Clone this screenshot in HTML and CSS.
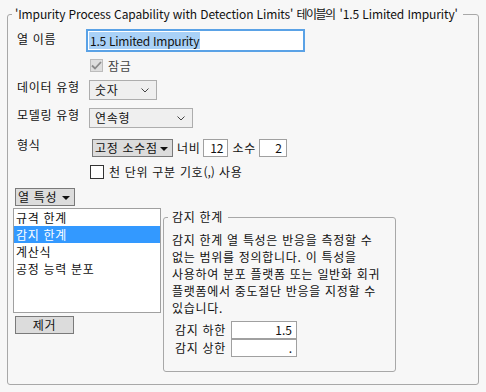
FILE: index.html
```html
<!DOCTYPE html>
<html lang="ko">
<head>
<meta charset="utf-8">
<link rel="stylesheet" href="styles.css">
</head>
<body>
<fieldset class="outer">
  <legend class="outer-legend">'Impurity Process Capability with Detection Limits' <span class="ko-tight">테이블의</span> '1.5 Limited Impurity'</legend>

  <div class="row row-name">
    <span class="label">열 이름</span>
    <div class="name-input"><span class="sel lat">1.5 Limited Impurity</span></div>
  </div>

  <div class="row row-lock">
    <span class="check checked-disabled">
      <svg width="11" height="9" viewBox="0 0 11 9"><path d="M1 4.5 L4 7.5 L10 1" fill="none" stroke="#8a8a8a" stroke-width="1.8"/></svg>
    </span>
    <span class="lock-text">잠금</span>
  </div>

  <div class="row row-select">
    <span class="label">데이터 유형</span>
    <div class="select sel-type"><span>숫자</span>
      <svg class="chev" width="8" height="5" viewBox="0 0 8 5"><path d="M0.5 0.5 L4 4 L7.5 0.5" fill="none" stroke="#444" stroke-width="1"/></svg>
    </div>
  </div>

  <div class="row row-select row-model">
    <span class="label">모델링 유형</span>
    <div class="select sel-model"><span>연속형</span>
      <svg class="chev" width="8" height="5" viewBox="0 0 8 5"><path d="M0.5 0.5 L4 4 L7.5 0.5" fill="none" stroke="#444" stroke-width="1"/></svg>
    </div>
  </div>

  <div class="row row-format">
    <span class="label">형식</span>
    <div class="format-controls">
      <div class="btn combo combo-format">고정 소수점 <span class="tri"></span></div>
      <span class="flabel">너비</span>
      <div class="numbox nb-width lat">12</div>
      <span class="flabel">소수</span>
      <div class="numbox nb-dec lat">2</div>
    </div>
  </div>

  <div class="row row-thousand">
    <span class="check"></span>
    <span class="thousand-text">천 단위 구분 기호<span class="lat">(,)</span> 사용</span>
  </div>

  <div class="row row-props">
    <div class="btn combo combo-props">열 특성 <span class="tri"></span></div>
  </div>

  <div class="lower">
    <div class="left-col">
      <ul class="list">
        <li>규격 한계</li>
        <li class="selected">감지 한계</li>
        <li>계산식</li>
        <li>공정 능력 분포</li>
      </ul>
      <div class="btn remove">제거</div>
    </div>

    <fieldset class="inner">
      <legend class="inner-legend">감지 한계</legend>
      <p class="desc">감지 한계 열 특성은 반응을 측정할 수<br>없는 범위를 정의합니다. 이 특성을<br>사용하여 분포 플랫폼 또는 일반화 회귀<br>플랫폼에서 중도절단 반응을 지정할 수<br>있습니다.</p>
      <div class="limit-row">
        <span class="limit-label">감지 하한</span>
        <div class="numbox limit-box lat">1.5</div>
      </div>
      <div class="limit-row">
        <span class="limit-label">감지 상한</span>
        <div class="numbox limit-box lat">.</div>
      </div>
    </fieldset>
  </div>
</fieldset>
</body>
</html>
```
FILE: styles.css
```css
* { box-sizing: border-box; }
html, body {
  margin: 0;
  padding: 0;
  width: 486px;
  height: 392px;
  background: #f7f7f7;
  overflow: hidden;
}
body {
  font-family: "Noto Sans CJK KR", "Noto Sans", sans-serif;
  font-size: 12px;
  letter-spacing: 0.7px;
  line-height: 16px;
  color: #111;
  padding: 6px 7px 7px 7px;
}
.lat { font-size: 12px; letter-spacing: 0; }
.outer {
  margin: 0;
  padding: 0;
  height: 379px;
  border: 1px solid #a8a8a8;
  border-radius: 3px;
  min-width: 0;
}
.outer-legend {
  margin-left: 4px;
  padding: 0 5px 0 3px;
  height: 16px;
  line-height: 16px;
  letter-spacing: -0.12px;
  white-space: nowrap;
}
.ko-tight { letter-spacing: -1.6px; margin-right: 2px; }
.row {
  display: flex;
  align-items: center;
}
.label {
  width: 69px;
  margin-left: 9px;
  flex: none;
  white-space: nowrap;
}
.row-name { margin-top: 7px; height: 23px; }
.row-name .label { margin-top: -3px; }
.name-input {
  width: 219px;
  height: 23px;
  border: 2px solid #5aa2e6;
  background: #fff;
  padding: 1px 0 0 1px;
}
.sel {
  display: inline-block;
  background: #a9d1f7;
  height: 17px;
  line-height: 17px;
  padding: 0 1px;
  letter-spacing: -0.25px;
}
.row-lock { margin-top: 7px; height: 13px; }
.check {
  width: 13px;
  height: 13px;
  border: 1px solid #333;
  background: #fff;
  display: inline-flex;
  align-items: center;
  justify-content: center;
  flex: none;
}
.row-lock .check { margin-left: 82px; }
.checked-disabled {
  background: #dedede;
  border-color: #bcbcbc;
}
.lock-text { margin-left: 5px; color: #444; }

.row-select { margin-top: 8px; height: 20px; align-items: flex-start; }
.row-select .label { margin-top: -1px; }
.row-model { margin-top: 8px; }
.select {
  margin-left: 3px;
  height: 20px;
  border: 1px solid #adadad;
  background: #efefef;
  display: flex;
  align-items: center;
  justify-content: space-between;
  padding: 0 7px 0 5px;
}
.sel-type { width: 68px; }
.sel-model { width: 104px; }
.chev { flex: none; }

.row-format { margin-top: 11px; height: 18px; align-items: flex-start; }
.row-format .label { margin-top: -2px; }
.format-controls {
  display: flex;
  align-items: center;
  margin-left: 6px;
}
.btn {
  height: 18px;
  background: #dcdcdc;
  border: 1px solid #7a7a7a;
  display: flex;
  align-items: center;
  white-space: nowrap;
}
.combo { padding: 0 4px 0 2px; }
.combo-format { width: 81px; justify-content: space-between; }
.tri {
  width: 0;
  height: 0;
  border-left: 4px solid transparent;
  border-right: 4px solid transparent;
  border-top: 4px solid #111;
  margin-top: 1px;
}
.flabel { margin: 0 3px 0 4px; }
.numbox {
  height: 18px;
  background: #fff;
  border: 1px solid #a0a0a0;
  text-align: right;
  padding: 0 4px 0 0;
  line-height: 16px;
}
.nb-width { width: 25px; }
.nb-dec { width: 28px; }

.row-thousand { margin-top: 8px; height: 14px; }
.row-thousand .check { width: 14px; height: 14px; margin-left: 82px; border-color: #333; }
.thousand-text { margin-left: 5px; }

.row-props { margin-top: 9px; height: 18px; padding-left: 7px; }
.combo-props { width: 60px; justify-content: space-between; }

.lower {
  display: flex;
  align-items: flex-start;
  margin-top: 2px;
  padding-left: 5px;
}
.left-col { width: 148px; flex: none; }
.list {
  list-style: none;
  margin: 0;
  padding: 0;
  height: 105px;
  background: #fff;
  border: 1px solid #a0a0a0;
}
.list li {
  height: 17px;
  line-height: 17px;
  padding-left: 2px;
}
.list li.selected {
  background: #3399ff;
  color: #fff;
}
.remove {
  margin: 3px 0 0 2px;
  width: 59px;
  justify-content: center;
}
.inner {
  margin: 1px 0 0 2px;
  padding: 0;
  width: 233px;
  height: 163px;
  border: 1px solid #a8a8a8;
  border-radius: 3px;
  min-width: 0;
}
.inner-legend {
  margin-left: 4px;
  padding: 0 5px 0 4px;
  height: 16px;
  line-height: 16px;
}
.desc {
  margin: 6px 0 0 8px;
  line-height: 17px;
  white-space: nowrap;
}
.limit-row {
  display: flex;
  align-items: center;
  margin-left: 11px;
  height: 18px;
}
.limit-row:first-of-type { margin-top: 5px; }
.limit-label { width: 56px; flex: none; }
.limit-box { width: 66px; height: 18px; }
```
